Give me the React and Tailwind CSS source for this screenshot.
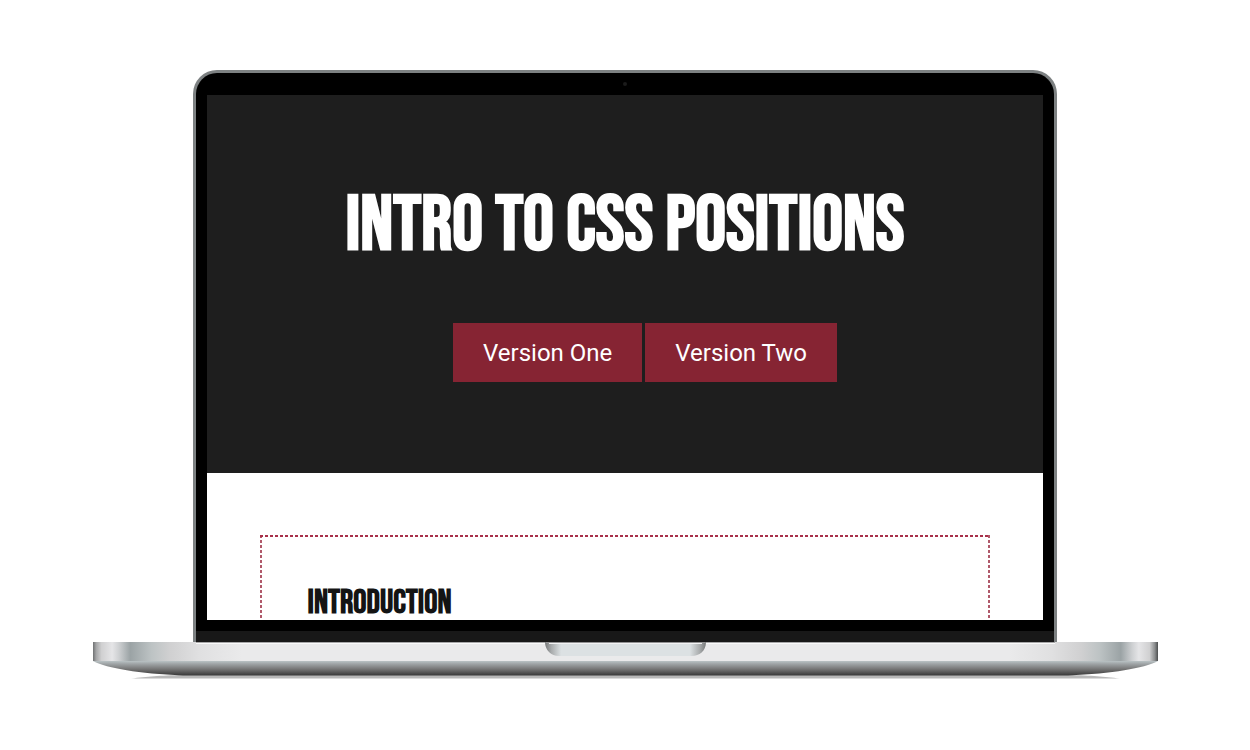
const versions = [
  { label: 'Version One', href: '#version-one' },
  { label: 'Version Two', href: '#version-two' },
];

function Hero() {
  return (
    <header className="bg-[#1e1e1e] px-6 pt-[87px] pb-[91px] text-center">
      <h1 className="font-['Bebas_Neue','Roboto_Condensed','Liberation_Sans',sans-serif] text-[77px] leading-[88px] font-bold whitespace-nowrap text-white uppercase">
        Intro to CSS Positions
      </h1>
      <nav aria-label="Versions" className="mt-[53px] pl-10">
        <ul className="flex justify-center gap-[3px]">
          {versions.map((v) => (
            <li key={v.href}>
              <a
                href={v.href}
                className="block bg-[#862433] px-[30px] pt-[15px] pb-[13px] font-[Roboto,sans-serif] text-2xl leading-[31px] text-white"
              >
                {v.label}
              </a>
            </li>
          ))}
        </ul>
      </nav>
    </header>
  );
}

function Introduction() {
  return (
    <section className="mx-[53px] mt-[62px] h-60 bg-[image:repeating-linear-gradient(90deg,#a8304a_0_3px,transparent_3px_5px),repeating-linear-gradient(180deg,#b0596a_0_3px,transparent_3px_5px),repeating-linear-gradient(180deg,#b0596a_0_3px,transparent_3px_5px)] bg-[size:100%_2px,2px_100%,2px_100%] bg-[position:0_0,0_0,100%_0] bg-no-repeat px-12 pt-[52px]">
      <h2 className="font-['Bebas_Neue','Roboto_Condensed','Liberation_Sans',sans-serif] text-[33px] leading-8 font-bold text-[#141414] uppercase">
        Introduction
      </h2>
    </section>
  );
}

function Lid() {
  return (
    <div className="mx-auto w-[81.2%] rounded-t-3xl border-x-[3px] border-t-[3px] border-[#7d8182] bg-black">
      <div className="flex h-[22px] items-center justify-center">
        <span className="size-1 rounded-full bg-[#1b1b1b]" />
      </div>
      <main className="mx-[11px] h-[525px] overflow-hidden bg-white">
        <Hero />
        <Introduction />
      </main>
      <div className="mt-[11px] h-[11px] bg-[#181818]" />
    </div>
  );
}

function Base() {
  return (
    <svg viewBox="0 0 1065 38" className="block w-full" aria-hidden="true">
      <defs>
        <linearGradient id="deck">
          <stop offset="0" stopColor="#6f7172" />
          <stop offset=".003" stopColor="#a5a6a7" />
          <stop offset=".008" stopColor="#d0d0d1" />
          <stop offset=".018" stopColor="#e5e5e7" />
          <stop offset=".024" stopColor="#cfd1d3" />
          <stop offset=".035" stopColor="#9ba3a5" />
          <stop offset=".055" stopColor="#bdc3c4" />
          <stop offset=".072" stopColor="#d0d0d1" />
          <stop offset=".1" stopColor="#e0e0e1" />
          <stop offset=".14" stopColor="#eaeaeb" />
          <stop offset=".86" stopColor="#eaeaeb" />
          <stop offset=".9" stopColor="#e0e0e1" />
          <stop offset=".928" stopColor="#d0d0d1" />
          <stop offset=".945" stopColor="#bdc3c4" />
          <stop offset=".965" stopColor="#9ba3a5" />
          <stop offset=".976" stopColor="#cfd1d3" />
          <stop offset=".982" stopColor="#e5e5e7" />
          <stop offset=".992" stopColor="#d0d0d1" />
          <stop offset=".997" stopColor="#8b8d8e" />
          <stop offset="1" stopColor="#4b4d4e" />
        </linearGradient>
        <linearGradient id="underside" x2="0" y2="1">
          <stop offset="0" stopColor="#b9c2c4" />
          <stop offset=".2" stopColor="#9fa4a6" />
          <stop offset=".55" stopColor="#777" />
          <stop offset="1" stopColor="#383838" />
        </linearGradient>
        <linearGradient id="notch">
          <stop offset="0" stopColor="#77797a" />
          <stop offset=".04" stopColor="#a9acad" />
          <stop offset=".1" stopColor="#dce1e3" />
          <stop offset=".9" stopColor="#dce1e3" />
          <stop offset=".96" stopColor="#a9acad" />
          <stop offset="1" stopColor="#77797a" />
        </linearGradient>
      </defs>
      <path d="M38 36.5C55 34.5 65 33.5 90 33H975C1000 33.5 1010 34.5 1027 36.5Z" fill="#b8b8b8" />
      <path d="M0 19H1065C1050 26.5 1020 31.5 975 33.5H90C45 31.5 15 26.5 0 19Z" fill="url(#underside)" />
      <rect width="1065" height="19" fill="url(#deck)" />
      <path d="M103 .5H962" stroke="#a8a8a9" />
      <path d="M103 1.5H962" stroke="#fafafa" />
      <path d="M452 0H613C613 9 606 14 599 14H466C458 14 452 8 452 0Z" fill="url(#notch)" />
      <path d="M453 .5H612" stroke="#929293" />
      <path d="M456 1.5H609" stroke="#f3f3f4" />
    </svg>
  );
}

export default function App() {
  return (
    <div className="min-h-screen bg-white px-[7.4%] pt-[70px] pb-8">
      <Lid />
      <Base />
    </div>
  );
}
